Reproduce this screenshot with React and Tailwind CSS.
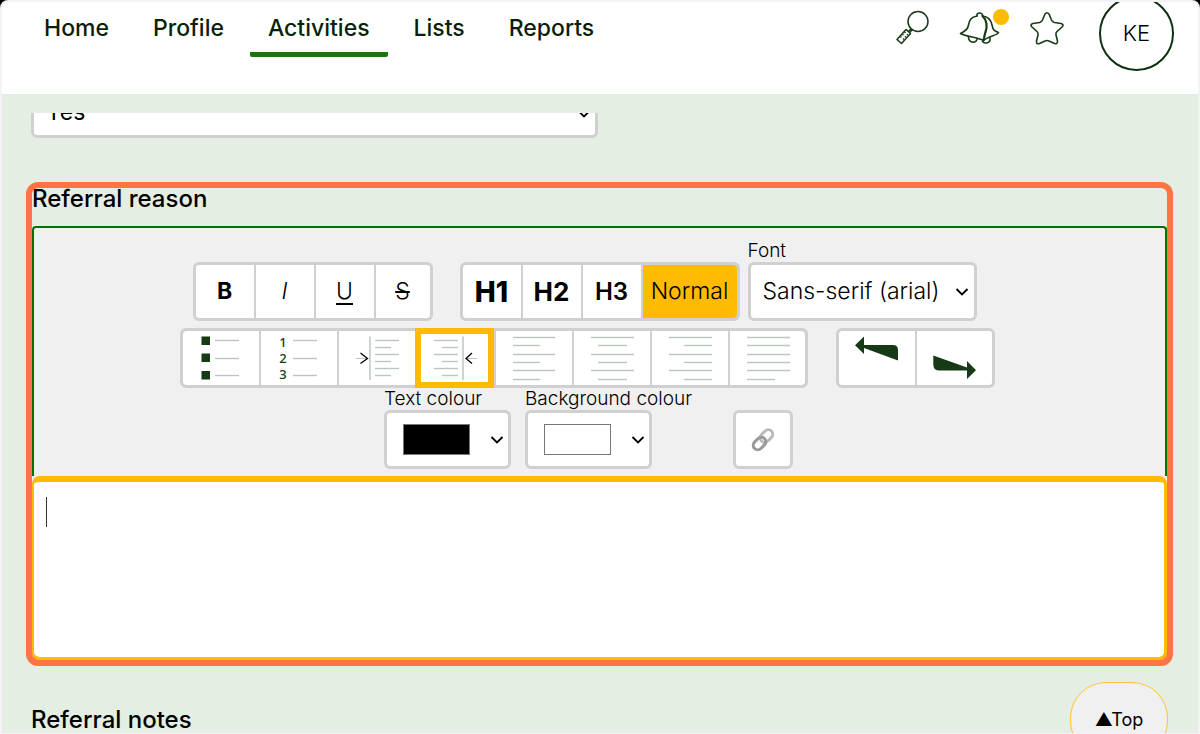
const line = "#bcc6bc";
const ink = "#163a16";

function Lines({ rows }) {
  return rows.map(([x1, x2, y]) => (
    <line key={y} x1={x1} x2={x2} y1={y} y2={y} stroke={line} strokeWidth="1.4" />
  ));
}

function Glyph({ children }) {
  return (
    <svg width="76" height="54" viewBox="0 0 76 54" fill="none" aria-hidden="true" className="shrink-0">
      {children}
    </svg>
  );
}

const indentYs = [9, 16, 23, 30, 37, 44];
const alignYs = [6, 14, 23, 31, 39, 48];
const rows = (ys, long, short) => ys.map((y, i) => [...(i % 2 ? short : long), y + 0.5]);

const listTools = [
  ["Bulleted list", (
    <>
      {[5.5, 22.5, 40].map((y) => <rect key={y} x="18.500" y={y} width="8.500" height="8.500" fill={ink} />)}
      <Lines rows={[[32, 56, 9.5], [32, 56, 27.5], [32, 56, 44.5]]} />
    </>
  )],
  ["Numbered list", (
    <>
      <g fill={ink} fontFamily="Noto Sans, sans-serif" fontSize="13" fontWeight="500" textAnchor="middle">
        <text x="22" y="16">1</text>
        <text x="22" y="32">2</text>
        <text x="22" y="48">3</text>
      </g>
      <Lines rows={[[32, 56, 9.5], [32, 56, 27.5], [32, 56, 44.5]]} />
    </>
  )],
  ["Increase indent", (
    <>
      <path d="M17 27.5H28" stroke={line} />
      <path d="M21.500 22L28.500 27.5L21.500 32.5" stroke="#000" strokeWidth="1.3" />
      <path d="M31 5.5V49" stroke={line} strokeWidth="1.5" />
      <Lines rows={rows(indentYs, [36, 60], [36, 52])} />
    </>
  )],
  ["Decrease indent", (
    <>
      <path d="M50 27.5H60" stroke={line} />
      <path d="M55 22L49 27.5L55 32.5" stroke="#000" strokeWidth="1.3" />
      <path d="M46 5.5V49" stroke={line} strokeWidth="1.5" />
      <Lines rows={rows(indentYs, [17, 41], [25, 41])} />
    </>
  )],
  ["Align left", <Lines rows={rows(alignYs, [17, 59], [17, 44])} />],
  ["Align centre", <Lines rows={rows(alignYs, [17, 60], [24, 53])} />],
  ["Align right", <Lines rows={rows(alignYs, [17, 60], [32, 60])} />],
  ["Justify", <Lines rows={alignYs.map((y, i) => [17, i === 5 ? 45 : 60, y + 0.5])} />],
];

const styleTools = [
  ["Bold", "B", "font-bold"],
  ["Italic", "I", "font-light italic"],
  ["Underline", "U", "font-light underline underline-offset-4"],
  ["Strikethrough", "S", "font-light line-through"],
];

const group = "flex h-[59px] gap-0.5 overflow-hidden rounded-md border-[3px] border-[#d0d0d0] bg-[#d0d0d0]";
const cell = "flex items-center justify-center bg-white";

function Chevron({ className }) {
  return (
    <svg width="14" height="8" viewBox="0 0 14 8" fill="none" aria-hidden="true" className={className}>
      <path d="M1.5 1L7 6.5L12.5 1" stroke="#000" strokeWidth="1.8" />
    </svg>
  );
}

function ColourPicker({ id, label, swatch }) {
  return (
    <div className="mr-3.5 w-[127px]">
      <label htmlFor={id} className="block h-[22px] text-[19px] leading-[22px] font-light whitespace-nowrap">{label}</label>
      <button id={id} type="button" className="flex h-[59px] w-full items-center justify-between rounded-md border-[3px] border-[#d0d0d0] bg-white pr-1 pl-4">
        <span className={swatch} />
        <Chevron />
      </button>
    </div>
  );
}

export default function App() {
  const nav = ["Home", "Profile", "Activities", "Lists", "Reports"];
  return (
    <div className="h-screen bg-black font-['Inter',sans-serif] text-black">
      <div className="flex h-full flex-col overflow-hidden rounded-t-lg border-2 border-b-1 border-[#f2f2f7] bg-[#e4eee3]">
        <header className="flex h-[92px] shrink-0 items-start justify-between rounded-t-md bg-white pr-6 pl-6">
          <nav className="flex gap-2">
            {nav.map((item) => (
              <a
                key={item}
                href="#"
                className={
                  item === "Activities"
                    ? "h-[55px] rounded-xs border-b-5 border-[#1a750f] px-[18px] pt-2 text-[23px] leading-9 font-medium text-[#0a1f0a]"
                    : "h-[55px] px-[18px] pt-2 text-[23px] leading-9 font-medium text-[#0a1f0a]"
                }
              >
                {item}
              </a>
            ))}
          </nav>
          <div className="flex items-start">
            <button type="button" aria-label="Search" className="mt-2 mr-[27px]">
              <svg width="36" height="36" viewBox="0 0 36 36" fill="none" stroke={ink} strokeWidth="1.5">
                <circle cx="22" cy="11.5" r="10" />
                <path d="M15.500 18.500L12 21.500M16.500 19.500L13.500 22.500" />
                <path d="M10 19.500L14.500 23.500L5.500 33.500L1 29.500Z" strokeLinejoin="round" />
                <path d="M9.500 22L4 28M12 24L6 30.500" strokeWidth="1.2" strokeDasharray="1.5 1.5" />
              </svg>
            </button>
            <button type="button" aria-label="Notifications" className="relative mt-2 mr-7">
              <svg width="42" height="36" viewBox="0 0 42 36" fill="none" stroke={ink} strokeWidth="1.6" strokeLinejoin="round" strokeLinecap="round">
                <path d="M18 6C16.500 2 24.500 2 23.500 6" />
                <path d="M18 6C12 7 10.500 10 9.500 15C8.500 21 5 21 1.500 23.500C8 27 17 27 24.500 30.500" />
                <path d="M23.500 6C28 10 28.500 17 26.500 22C25 26 25.500 28 24.500 30.500" strokeWidth="2.2" />
                <path d="M23.500 6C29 6.500 32 10 33 15C34 20 35 21 39.500 22.500C38 25.500 30 26 25 30" />
                <path d="M9.500 27C9.500 32.500 16 34 18 29.500M23.500 31.500C25.500 34 32 33.500 31 28" />
              </svg>
              <span className="absolute -top-px -right-2 size-4 rounded-full bg-[#ffbb00]" />
            </button>
            <button type="button" aria-label="Favourites" className="mt-2 mr-[34px]">
              <svg width="36" height="36" viewBox="0 0 36 36" fill="none" stroke={ink} strokeWidth="1.6" strokeLinejoin="round">
                <path d="M16 4Q18 1.500 20 4L22.500 10Q23.500 12 25.500 12.500L32 13.500Q35.500 14.500 33 17L28 21.500Q26.500 22.800 27 25L28.500 31Q28.500 34.500 25.500 33.500L20 31Q18 30 16 31L10.500 33.500Q7 34.500 7.500 31L9 25Q9.500 22.800 8 21.500L3 17Q0.500 14.500 4 13.500L10.500 12.500Q12.500 12 13.500 10Z" />
              </svg>
            </button>
            <button type="button" className="-mt-1.5 size-[75px] rounded-full border-2 border-[#0f3010] text-[22px] font-light">KE</button>
          </div>
        </header>

        <main className="mt-[19px] flex min-h-0 grow flex-col overflow-hidden pr-[25px] pl-6">
          <div className="ml-[5px] flex h-[25px] shrink-0 items-end overflow-hidden">
            <div className="relative w-1/2 max-w-[567px]">
              <select aria-label="Referral accepted" className="block h-[59px] w-full appearance-none rounded-md border-[3px] border-[#d0d0d0] bg-white px-3 pt-2 text-[23px] font-normal">
                <option>Yes</option>
              </select>
              <Chevron className="absolute right-[7px] bottom-5" />
            </div>
          </div>

          <section className="mt-11 shrink-0 rounded-xl border-6 border-[#ff7442]">
            <h2 className="h-[38px] text-[24px] leading-[22px] font-medium">Referral reason</h2>
            <div className="rounded-t-sm border-2 border-b-0 border-[#087008] bg-[#f0f0f0] pt-3">
              <div className="flex items-end justify-center">
                <div className={`${group} mr-[27px] w-60`}>
                  {styleTools.map(([label, text, look]) => (
                    <button key={label} type="button" aria-label={label} className={`${cell} w-[58px] text-[23px] last:w-auto last:flex-1 ${look}`}>
                      {text}
                    </button>
                  ))}
                </div>
                <div className={`${group} mr-2 w-[280px]`}>
                  <button type="button" className={`${cell} flex-1 text-[28px] font-extrabold`}>H1</button>
                  <button type="button" className={`${cell} flex-1 text-[26px] font-bold`}>H2</button>
                  <button type="button" className={`${cell} flex-1 text-2xl font-semibold`}>H3</button>
                  <button type="button" aria-pressed="true" className="flex w-[94px] items-center justify-center rounded-r-sm bg-[#ffbb00] text-[23px] font-light">Normal</button>
                </div>
                <div className="relative mr-[30px] w-[229px]">
                  <label htmlFor="font" className="block h-[22px] text-[19px] leading-[22px] font-light">Font</label>
                  <select id="font" className="block h-[59px] w-full appearance-none rounded-md border-[3px] border-[#d0d0d0] bg-white px-3 text-[23px] font-light">
                    <option>Sans-serif (arial)</option>
                  </select>
                  <Chevron className="absolute right-2 bottom-[25px]" />
                </div>
              </div>

              <div className="mt-[7px] flex justify-center">
                <div className="mr-7 flex h-15 w-[628px] gap-0.5 rounded-md border-[3px] border-[#d0d0d0] bg-[#d0d0d0]">
                  {listTools.map(([label, icon]) => (
                    <button
                      key={label}
                      type="button"
                      aria-label={label}
                      className="relative flex min-w-0 flex-1 bg-white first:rounded-l-sm last:w-[75px] last:flex-none last:rounded-r-sm"
                    >
                      <Glyph>{icon}</Glyph>
                      {label === "Decrease indent" && (
                        <span className="absolute -inset-y-[3px] right-0 -left-0.5 border-6 border-[#ffbb00]" />
                      )}
                    </button>
                  ))}
                </div>
                <div className="mr-6 flex h-15 w-[159px] gap-0.5 overflow-hidden rounded-md border-[3px] border-[#d0d0d0] bg-[#d0d0d0]">
                  <button type="button" aria-label="Undo" className="flex min-w-0 flex-1 bg-white">
                    <Glyph>
                      <path d="M16 14.300L25 5.500V14H54Q59 14 59 19V29.500L25 17V23Z" fill={ink} />
                    </Glyph>
                  </button>
                  <button type="button" aria-label="Redo" className="flex min-w-0 flex-1 bg-white">
                    <Glyph>
                      <path d="M16.300 24.500L50 36.500V30L59 39.300L50 48V39.500H21.500Q16.300 39.500 16.300 33Z" fill={ink} />
                    </Glyph>
                  </button>
                </div>
              </div>

              <div className="flex items-end justify-center pb-[7px]">
                <ColourPicker id="text-colour" label="Text colour" swatch="h-[31px] w-[67px] border border-[#777] bg-black" />
                <ColourPicker id="background-colour" label="Background colour" swatch="h-[31px] w-[67px] border border-[#777] bg-white" />
                <button type="button" aria-label="Insert link" className="mr-[22px] ml-[67px] flex h-[59px] w-15 items-center justify-center rounded-md border-[3px] border-[#d0d0d0] bg-white">
                  <svg width="26" height="26" viewBox="0 0 26 26" fill="none" strokeWidth="3">
                    <rect x="9.500" y="4.500" width="14" height="9" rx="4.500" transform="rotate(-45 16.500 9)" stroke="#bbb" />
                    <rect x="2.500" y="12" width="14" height="9" rx="4.500" transform="rotate(-45 9.500 16.500)" stroke="#999" />
                  </svg>
                </button>
              </div>
            </div>
            <div className="relative rounded-b-md bg-linear-to-b from-[#f0f0f0] from-50% to-[#ff7442] to-50%">
              <textarea
                aria-label="Referral reason"
                className="block h-[184px] w-full resize-none rounded-lg border-t-6 border-r-3 border-b-3 border-l-2 border-[#ffbb00] bg-white px-3 py-3.5 text-[23px] leading-8 font-light outline-none"
              />
              <span className="absolute top-[21px] left-3.5 h-[30px] w-px bg-[#333]" />
            </div>
          </section>

          <div className="mt-4 flex shrink-0 items-start justify-between pr-[5px] pl-[5px]">
            <h2 className="mt-[22px] text-[24px] leading-8 font-medium">Referral notes</h2>
            <a href="#" className="flex h-[75px] w-[98px] items-center justify-center rounded-[36px] border border-[#ffc33c] bg-[#f0f0f0] text-lg">▲Top</a>
          </div>
        </main>
      </div>
    </div>
  );
}
